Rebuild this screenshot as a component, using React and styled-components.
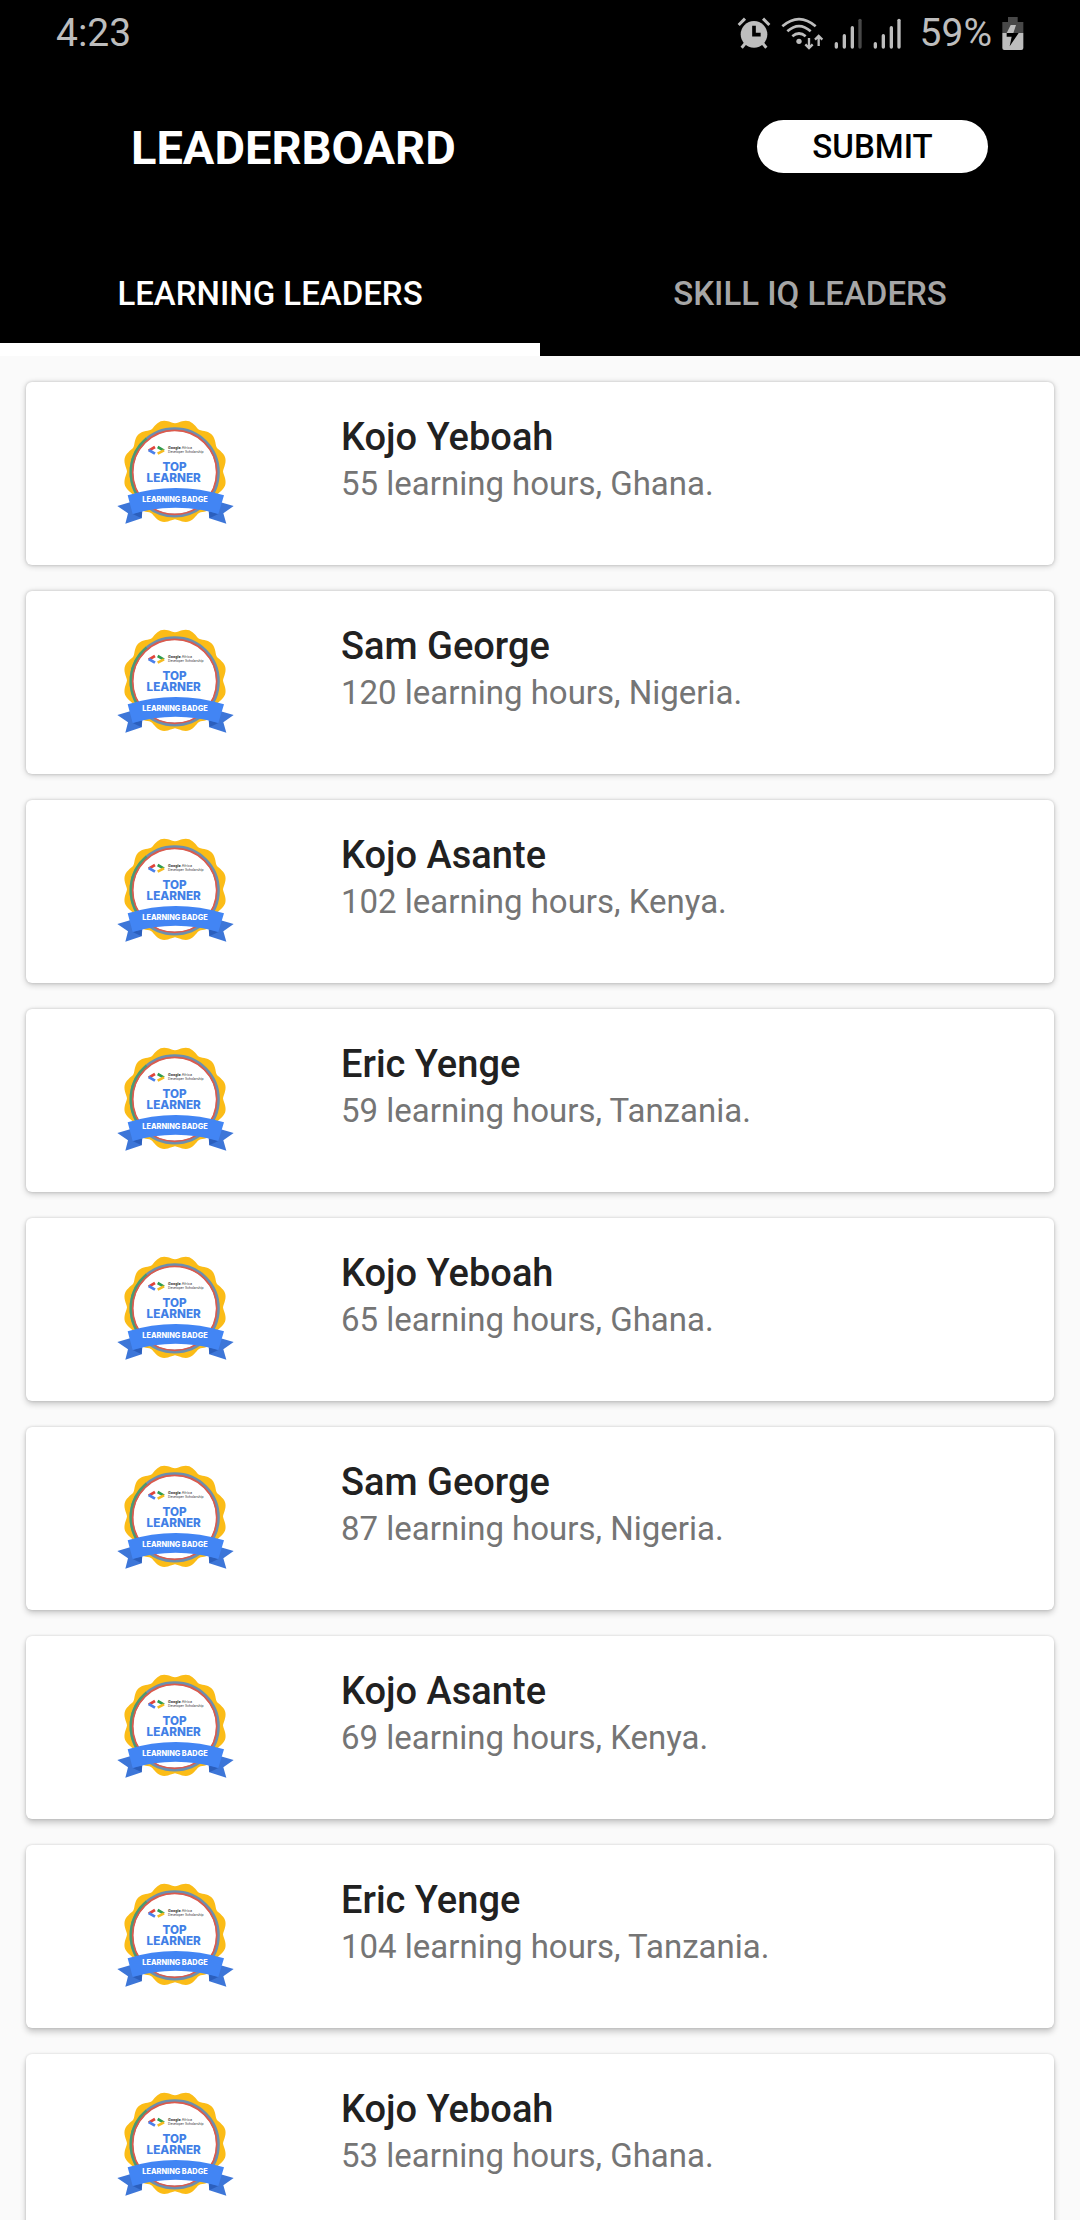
import React from "react";
import styled, { createGlobalStyle } from "styled-components";

const GlobalStyle = createGlobalStyle`
  *, *::before, *::after { box-sizing: border-box; }
  body { margin: 0; background: #fafafa; }
  body, button { font-family: Roboto, "Noto Sans", sans-serif; }
  h1, h2, p, ul { margin: 0; padding: 0; font-weight: 400; }
`;

const Screen = styled.div`
  display: flex;
  flex-direction: column;
  height: 100vh;
  overflow: hidden;
  background: #fafafa;
`;

const TopArea = styled.header`
  flex: none;
  background: #000;
  color: #fff;
`;

const StatusBar = styled.div`
  display: flex;
  align-items: center;
  justify-content: space-between;
  height: 66px;
  padding: 0 56px;
  color: #bdbdbd;
  font-size: 39px;
  line-height: 66px;
`;

const StatusGroup = styled.div`
  display: flex;
  align-items: center;
  gap: 10px;
`;

const BatteryLevel = styled.span`
  padding-left: 8px;
`;

const StatusIcon = styled.svg`
  display: block;
  flex: none;
`;

const TitleBar = styled.div`
  display: flex;
  align-items: center;
  justify-content: space-between;
  height: 161px;
  padding: 0 92px 0 131px;
`;

const Title = styled.h1`
  padding-top: 2px;
  font-size: 47px;
  line-height: 56px;
  font-weight: 700;
`;

const SubmitButton = styled.button`
  width: 231px;
  height: 53px;
  padding: 0;
  border: 0;
  border-radius: 27px;
  background: #fff;
  color: #000;
  font-size: 33px;
  line-height: 53px;
  font-weight: 500;
`;

const Tabs = styled.div`
  display: grid;
  grid-template-columns: 1fr 1fr;
`;

const Tab = styled.button`
  height: 129px;
  padding: 18px 0 0;
  border: 0;
  border-bottom: 13px solid ${(p) => (p.$active ? "#fff" : "#000")};
  background: #000;
  color: ${(p) => (p.$active ? "#fff" : "#a6a6a6")};
  font-size: 33px;
  line-height: 40px;
  font-weight: 500;
`;

const List = styled.ul`
  display: flex;
  flex: 1;
  flex-direction: column;
  gap: 26px;
  min-height: 0;
  padding: 26px;
  overflow-y: auto;
  scrollbar-width: none;
  list-style: none;
`;

const Card = styled.li`
  display: flex;
  flex: none;
  align-items: flex-start;
  gap: 107px;
  height: 183px;
  padding: 33px 91px;
  border-radius: 6px;
  background: #fff;
  box-shadow:
    0 0 3px rgba(0, 0, 0, 0.16),
    0 ${(p) => p.$drop}px 6px rgba(0, 0, 0, 0.2);
`;

const BadgeArt = styled.svg`
  display: block;
  flex: none;
  width: 117px;
  height: 104px;
  margin-top: 5px;
`;

const Name = styled.h2`
  color: #212121;
  font-size: 38px;
  line-height: 44px;
  font-weight: 500;
`;

const Detail = styled.p`
  margin-top: 5px;
  color: #757575;
  font-size: 33px;
  line-height: 40px;
`;

const scallop = (() => {
  const points = [];
  for (let deg = 0; deg < 360; deg += 2) {
    const a = (deg * Math.PI) / 180;
    const r = 144 + 12 * Math.pow(Math.abs(Math.sin(6 * a)), 1.5);
    points.push(`${(225 + r * Math.sin(a)).toFixed(1)},${(214 - r * Math.cos(a)).toFixed(1)}`);
  }
  return points.join(" ");
})();

function Badge() {
  return (
    <BadgeArt viewBox="51 60 351 312" role="img" aria-label="Top learner badge">
      <polygon points={scallop} fill="#fbbc17" />
      <circle cx="224" cy="217" r="130" fill="#fff" stroke="#6c8fae" strokeWidth="11" />
      <path d="M140 116A131 131 0 0 0 120 296" fill="none" stroke="#4a9a72" strokeWidth="9" />
      <circle cx="224" cy="217" r="126" fill="none" stroke="#dc5a4c" strokeWidth="5" />
      <g fill="none" strokeWidth="8">
        <path d="M165 141L146 152" stroke="#e0443a" />
        <path d="M146 150L165 161" stroke="#4b80ea" />
        <path d="M173 141L192 152" stroke="#2f9c50" />
        <path d="M192 151L173 161" stroke="#f6bb20" />
      </g>
      <g fontFamily="Inter, sans-serif">
        <g fontSize="11" fill="#333">
          <text x="204" y="147"><tspan fontWeight="700">Google</tspan> Africa</text>
          <text x="204" y="160" fontSize="10">Developer Scholarship</text>
        </g>
        <g fontSize="35" fontWeight="800" fill="#427fe6" textAnchor="middle">
          <text x="224" y="214">TOP</text>
          <text x="221" y="245">LEARNER</text>
        </g>
      </g>
      <path d="M52 318L90 307L125 334V355L76 371L84 340Z" fill="#3d76d8" />
      <path d="M401 318L362 307L328 334V355L379 371L370 340Z" fill="#3d76d8" />
      <path d="M98 342L127 333L125 355Z" fill="#2b5fbd" />
      <path d="M355 342L326 333L328 355Z" fill="#2b5fbd" />
      <path d="M83 286Q227 242 372 286L355 342Q227 304 98 342Z" fill="#4285f4" />
      <text x="225" y="305" fontFamily="Inter, sans-serif" fontSize="22" fontWeight="800" fill="#fff" textAnchor="middle">
        LEARNING BADGE
      </text>
    </BadgeArt>
  );
}

function AlarmIcon() {
  return (
    <StatusIcon width="34" height="33" viewBox="51 46 102 99" aria-hidden="true">
      <circle cx="102" cy="98" r="40" fill="#bdbdbd" />
      <g fill="none" stroke="#bdbdbd" strokeWidth="9">
        <path d="M56 70L75 51M148 70L129 51M76 125L65 138M128 125L139 138" />
      </g>
      <path d="M102 72V99H122" fill="none" stroke="#000" strokeWidth="11" />
    </StatusIcon>
  );
}

function WifiIcon() {
  return (
    <StatusIcon width="43" height="33" viewBox="187 42 129 99" aria-hidden="true">
      <g fill="none" stroke="#bdbdbd" strokeWidth="8">
        <path d="M191 70Q241 27 291 70" />
        <path d="M206 85Q241 54 276 85" />
        <path d="M221 100Q241 83 261 100" />
        <path d="M271 105V134M260 124L271 135L282 124" strokeWidth="7" />
        <path d="M300 129V100M289 110L300 99L311 110" strokeWidth="7" />
      </g>
      <circle cx="241" cy="115" r="8" fill="#bdbdbd" />
    </StatusIcon>
  );
}

function SignalIcon({ last }) {
  return (
    <StatusIcon width="29" height="33" viewBox="346 44 87 99" aria-hidden="true">
      <g fill="none" stroke="#bdbdbd" strokeWidth="10" strokeLinecap="round">
        <path d="M353 124V134M377 100V134M401 76V134" />
        <path d="M424 54V134" stroke={last} />
      </g>
    </StatusIcon>
  );
}

function BatteryIcon() {
  return (
    <StatusIcon width="22" height="33" viewBox="848 45 66 99" aria-hidden="true">
      <path d="M866 45H895V60H912V93H849V60H866Z" fill="#484848" />
      <path d="M849 93H912V138Q912 144 906 144H855Q849 144 849 138Z" fill="#bdbdbd" />
      <path d="M874 69H890L882 93H862Z" fill="#bdbdbd" />
      <path d="M862 93H898L871 133L877 104H862Z" fill="#000" />
    </StatusIcon>
  );
}

const leaders = [
  { name: "Kojo Yeboah", hours: 55, country: "Ghana" },
  { name: "Sam George", hours: 120, country: "Nigeria" },
  { name: "Kojo Asante", hours: 102, country: "Kenya" },
  { name: "Eric Yenge", hours: 59, country: "Tanzania" },
  { name: "Kojo Yeboah", hours: 65, country: "Ghana" },
  { name: "Sam George", hours: 87, country: "Nigeria" },
  { name: "Kojo Asante", hours: 69, country: "Kenya" },
  { name: "Eric Yenge", hours: 104, country: "Tanzania" },
  { name: "Kojo Yeboah", hours: 53, country: "Ghana" },
];

export default function App() {
  return (
    <Screen>
      <GlobalStyle />
      <TopArea>
        <StatusBar>
          <span>4:23</span>
          <StatusGroup>
            <AlarmIcon />
            <WifiIcon />
            <SignalIcon last="#484848" />
            <SignalIcon last="#bdbdbd" />
            <BatteryLevel>59%</BatteryLevel>
            <BatteryIcon />
          </StatusGroup>
        </StatusBar>
        <TitleBar>
          <Title>LEADERBOARD</Title>
          <SubmitButton type="button">SUBMIT</SubmitButton>
        </TitleBar>
        <Tabs role="tablist">
          <Tab type="button" role="tab" aria-selected="true" $active>LEARNING LEADERS</Tab>
          <Tab type="button" role="tab" aria-selected="false">SKILL IQ LEADERS</Tab>
        </Tabs>
      </TopArea>
      <List>
        {leaders.map((leader, index) => (
          <Card key={index} $drop={1 + Math.floor(index / 2)}>
            <Badge />
            <div>
              <Name>{leader.name}</Name>
              <Detail>{leader.hours} learning hours, {leader.country}.</Detail>
            </div>
          </Card>
        ))}
      </List>
    </Screen>
  );
}
